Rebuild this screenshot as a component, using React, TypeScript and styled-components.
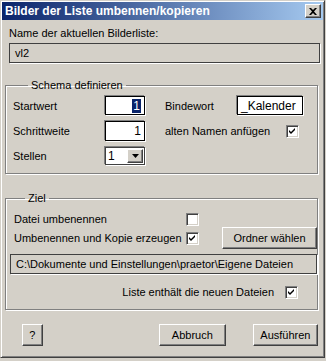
import React from 'react';
import styled, { createGlobalStyle } from 'styled-components';

const GlobalStyle = createGlobalStyle`
    body {
        margin: 0;
        background: #d4d0c8;
        font-family: "Liberation Sans", Arial, sans-serif;
        font-size: 11px;
        color: #000;
    }
`;

const Window = styled.div`
    box-sizing: border-box;
    width: 325px;
    height: 358px;
    padding: 1px;
    background: #d4d0c8;
    border: 1px solid;
    border-color: #d4d0c8 #404040 #404040 #d4d0c8;
    box-shadow: inset 1px 1px 0 #fff, inset -1px -1px 0 #808080;
    display: flex;
    flex-direction: column;
`;

const TitleBar = styled.div`
    height: 18px;
    display: flex;
    align-items: center;
    justify-content: space-between;
    padding: 0 2px 0 3px;
    background: linear-gradient(to right, #0a246a, #a6caf0);
    color: #fff;
    font-weight: bold;
    font-size: 12px;
`;

const CloseButton = styled.div`
    box-sizing: border-box;
    width: 16px;
    height: 14px;
    background: #d4d0c8;
    border: 1px solid;
    border-color: #fff #404040 #404040 #fff;
    box-shadow: inset -1px -1px 0 #808080;
    display: flex;
    align-items: center;
    justify-content: center;
`;

const Content = styled.div`
    flex: 1;
    display: flex;
    flex-direction: column;
    padding: 0 5px 0 3px;
`;

const Label = styled.div<{ $mt?: number }>`
    line-height: 14px;
    margin-top: ${p => p.$mt ?? 0}px;
    white-space: nowrap;
`;

const ReadOnlyBox = styled.div<{ $ml: number; $mr: number; $mt: number }>`
    box-sizing: border-box;
    height: 20px;
    margin: ${p => p.$mt}px ${p => p.$mr}px 0 ${p => p.$ml}px;
    padding-left: 5px;
    border: 1px solid #404040;
    box-shadow: 1px 1px 0 #fff;
    display: flex;
    align-items: center;
    white-space: nowrap;
    overflow: hidden;
`;

const Group = styled.fieldset<{ $mt: number; $pl: number; $pb: number }>`
    margin: ${p => p.$mt}px 0 0 0;
    padding: 0 0 ${p => p.$pb}px ${p => p.$pl}px;
    border: 1px solid #808080;
    box-shadow: 1px 1px 0 #fff, inset 1px 1px 0 #fff;
    min-width: 0;
`;

const Legend = styled.legend`
    margin-left: 15px;
    padding: 0 3px;
    line-height: 14px;
`;

const SchemaGrid = styled.div`
    display: grid;
    grid-template-columns: 92px 40px 20px 1fr;
    grid-template-rows: 19px 20px 18px;
    row-gap: 6px;
    align-items: center;
    margin-top: 4px;
    & > :nth-child(7) {
        margin-top: 2px;
    }
`;

const Edit = styled.div<{ $w: number; $h: number; $align?: string }>`
    box-sizing: border-box;
    width: ${p => p.$w}px;
    height: ${p => p.$h}px;
    background: #fff;
    border: 1px solid #000;
    box-shadow: -1px -1px 0 #808080, 1px 1px 0 #fff;
    display: flex;
    align-items: center;
    justify-content: ${p => p.$align === 'left' ? 'flex-start' : 'flex-end'};
    padding: 0 3px;
    font-size: 12px;
`;

const Selected = styled.span`
    background: #0a246a;
    color: #fff;
    line-height: 14px;
    padding: 0 1px;
`;

const Combo = styled.div`
    box-sizing: border-box;
    width: 40px;
    height: 18px;
    background: #fff;
    border: 1px solid #404040;
    box-shadow: -1px -1px 0 #808080, 1px 1px 0 #fff;
    display: flex;
    align-items: center;
    padding: 0 1px 0 2px;
    font-size: 12px;
`;

const ComboButton = styled.div`
    box-sizing: border-box;
    width: 16px;
    height: 14px;
    margin-left: auto;
    background: #d4d0c8;
    border: 1px solid;
    border-color: #fff #404040 #404040 #fff;
    box-shadow: inset -1px -1px 0 #808080;
    display: flex;
    align-items: center;
    justify-content: center;
`;

const RightCell = styled.div<{ $lw: number }>`
    display: flex;
    align-items: center;
    & > :first-child {
        width: ${p => p.$lw}px;
    }
`;

const Box = styled.div`
    box-sizing: border-box;
    width: 13px;
    height: 13px;
    background: #fff;
    border: 1px solid;
    border-color: #808080 #fff #fff #808080;
    box-shadow: inset 1px 1px 0 #404040, inset -1px -1px 0 #d4d0c8;
    display: flex;
    align-items: center;
    justify-content: center;
    flex-shrink: 0;
`;

const ZielGrid = styled.div`
    display: grid;
    grid-template-columns: 172px 13px 1fr;
    grid-template-rows: 16px 22px;
    align-items: center;
    margin-top: 6px;
    padding-left: 4px;
`;

const Button = styled.div<{ $w: number }>`
    box-sizing: border-box;
    width: ${p => p.$w}px;
    height: 22px;
    background: #d4d0c8;
    border: 1px solid;
    border-color: #fff #404040 #404040 #fff;
    box-shadow: inset -1px -1px 0 #808080;
    display: flex;
    align-items: center;
    justify-content: center;
    font-size: 11px;
`;

const OrdnerButton = styled(Button)`
    grid-column: 3;
    grid-row: 2;
    justify-self: end;
`;

const ListRow = styled.div`
    display: flex;
    align-items: center;
    justify-content: flex-end;
    gap: 11px;
    height: 14px;
    margin: 11px 19px 0 0;
`;

const Footer = styled.div`
    display: flex;
    align-items: center;
    margin: 14px 0 0 17px;
`;

function Check({ on }: { on?: boolean }) {
    return (
        <Box>
            {on && (
                <svg width="9" height="9" viewBox="0 0 9 9">
                    <path d="M1 3 L3 5 L7 1 L7 3 L3 7 L1 5 Z" fill="#000" />
                </svg>
            )}
        </Box>
    );
}

export default function App() {
    return (
        <>
            <GlobalStyle />
            <Window>
                <TitleBar>
                    <span>Bilder der Liste umbennen/kopieren</span>
                    <CloseButton>
                        <svg width="8" height="7" viewBox="0 0 8 7">
                            <path d="M0 0 L2 0 L4 2 L6 0 L8 0 L5 3.5 L8 7 L6 7 L4 5 L2 7 L0 7 L3 3.5 Z" fill="#000" />
                        </svg>
                    </CloseButton>
                </TitleBar>
                <Content>
                    <Label $mt={6} style={{ marginLeft: 4 }}>Name der aktuellen Bilderliste:</Label>
                    <ReadOnlyBox $ml={4} $mr={-2} $mt={3}>vl2</ReadOnlyBox>

                    <Group $mt={15} $pl={7} $pb={8}>
                        <Legend>Schema definieren</Legend>
                        <SchemaGrid>
                            <Label>Startwert</Label>
                            <Edit $w={40} $h={19}><Selected>1</Selected></Edit>
                            <span />
                            <RightCell $lw={72}>
                                <Label>Bindewort</Label>
                                <Edit $w={66} $h={19} $align="left">_Kalender</Edit>
                            </RightCell>

                            <Label>Schrittweite</Label>
                            <Edit $w={40} $h={20}>1</Edit>
                            <span />
                            <RightCell $lw={121}>
                                <Label>alten Namen anfügen</Label>
                                <Check on />
                            </RightCell>

                            <Label>Stellen</Label>
                            <Combo>
                                1
                                <ComboButton>
                                    <svg width="7" height="4" viewBox="0 0 7 4">
                                        <path d="M0 0 L7 0 L3.5 4 Z" fill="#000" />
                                    </svg>
                                </ComboButton>
                            </Combo>
                        </SchemaGrid>
                    </Group>

                    <Group $mt={17} $pl={4} $pb={10}>
                        <Legend>Ziel</Legend>
                        <ZielGrid>
                            <Label>Datei umbenennen</Label>
                            <Check />
                            <span />
                            <Label>Umbenennen und Kopie erzeugen</Label>
                            <Check on />
                            <OrdnerButton $w={95}>Ordner wählen</OrdnerButton>
                        </ZielGrid>
                        <ReadOnlyBox $ml={0} $mr={0} $mt={5}>C:\Dokumente und Einstellungen\praetor\Eigene Dateien</ReadOnlyBox>
                        <ListRow>
                            <Label>Liste enthält die neuen Dateien</Label>
                            <Check on />
                        </ListRow>
                    </Group>

                    <Footer>
                        <Button $w={21}>?</Button>
                        <Button $w={68} style={{ marginLeft: 116 }}>Abbruch</Button>
                        <Button $w={66} style={{ marginLeft: 27 }}>Ausführen</Button>
                    </Footer>
                </Content>
            </Window>
        </>
    );
}
